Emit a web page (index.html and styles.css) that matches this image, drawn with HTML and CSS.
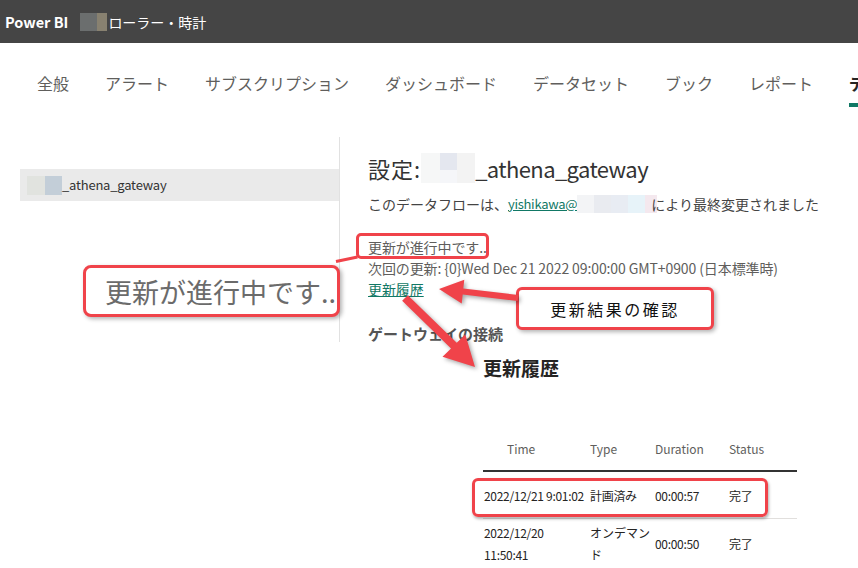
FILE: index.html
```html
<!DOCTYPE html>
<html lang="ja">
<head>
<meta charset="utf-8">
<title>Power BI - 設定</title>
<link rel="stylesheet" href="styles.css">
</head>
<body>
<header class="topbar">
  <span class="brand">Power BI</span>
  <span class="workspace"><span class="redact tb1"></span><span class="redact tb2"></span>ローラー・時計</span>
</header>

<nav class="tabs">
  <a class="tab">全般</a>
  <a class="tab">アラート</a>
  <a class="tab">サブスクリプション</a>
  <a class="tab">ダッシュボード</a>
  <a class="tab">データセット</a>
  <a class="tab">ブック</a>
  <a class="tab">レポート</a>
  <a class="tab active">データフロー</a>
</nav>

<main class="settings">
  <aside class="side">
    <div class="side-item selected"><span class="redact s1"></span><span class="redact s2"></span>_athena_gateway</div>
  </aside>
  <section class="detail">
    <h1 class="title">設定:<span class="redact t1"></span><span class="redact t2"></span><span class="redact t3"></span><span class="name">_athena_gateway</span></h1>
    <p class="owner">このデータフローは、<a class="link mail">yishikawa@</a><span class="redact o1"></span><span class="redact o2"></span><span class="redact o3"></span><span class="redact o4"></span><span class="redact o5"></span>により最終変更されました</p>
    <div class="status">
      <div>更新が進行中です..</div>
      <div>次回の更新: {0}Wed Dec 21 2022 09:00:00 GMT+0900 (日本標準時)</div>
      <div><a class="link">更新履歴</a></div>
    </div>
    <h3 class="section-head">ゲートウェイの接続</h3>
  </section>
</main>

<section class="history">
  <h2 class="history-title">更新履歴</h2>
  <div class="table-wrap">
    <table class="runs">
      <colgroup><col class="c-time"><col class="c-type"><col class="c-dur"><col class="c-status"></colgroup>
      <thead>
        <tr><th class="th-time">Time</th><th>Type</th><th>Duration</th><th>Status</th></tr>
      </thead>
      <tbody>
        <tr><td>2022/12/21 9:01:02</td><td>計画済み</td><td>00:00:57</td><td>完了</td></tr>
        <tr><td>2022/12/20<br>11:50:41</td><td class="wrap">オンデマンド</td><td>00:00:50</td><td>完了</td></tr>
      </tbody>
    </table>
    <div class="row-mark"></div>
  </div>
</section>

<div class="callout callout-status"><span>更新が進行中です..</span></div>
<div class="connector"></div>
<div class="mark-status"></div>
<div class="callout callout-check">更新結果の確認</div>

<svg class="arrows" width="858" height="568" viewBox="0 0 858 568" xmlns="http://www.w3.org/2000/svg">
  <polygon points="518.3,295 463.3,288.6 464.3,279.7 439,289 461.7,303.5 462.7,294.6 517.7,301"/>
  <polygon points="407.85,295.2 456.75,342.8 465.3,334.4 475,367 442.5,356.8 451.05,348.4 402.15,300.8"/>
</svg>
</body>
</html>
```

FILE: styles.css
```css
* { box-sizing: border-box; }

html, body {
  margin: 0;
  padding: 0;
}

body {
  width: 858px;
  height: 568px;
  overflow: hidden;
  position: relative;
  background: #ffffff;
  font-family: "Noto Sans CJK JP", "Noto Sans", sans-serif;
  color: #252423;
}

.redact {
  display: inline-block;
  vertical-align: middle;
}

/* top bar */
.topbar {
  height: 43px;
  background: #454545;
  display: flex;
  align-items: center;
  padding-left: 5px;
  color: #ffffff;
  font-size: 14px;
}
.brand {
  font-weight: 700;
  font-size: 14.5px;
}
.workspace {
  margin-left: 12px;
  display: flex;
  align-items: center;
}
.tb1 { width: 17px; height: 18px; background: #6b6e6e; }
.tb2 { width: 10px; height: 18px; background: #888170; margin-right: 1px; }

/* tabs */
.tabs {
  display: flex;
  gap: 36px;
  padding-left: 37px;
  height: 64px;
  white-space: nowrap;
  overflow: hidden;
}
.tab {
  padding-top: 29px;
  padding-bottom: 9px;
  line-height: 22px;
  font-size: 16px;
  color: #605e5c;
  border-bottom: 4px solid transparent;
}
.tab.active {
  color: #252423;
  font-weight: 700;
  border-bottom-color: #117865;
}

/* main settings */
.settings {
  display: flex;
  margin-top: 30px;
}
.side {
  margin-left: 20px;
  width: 320px;
  border-right: 1px solid #e1e1e1;
  padding-top: 32px;
}
.side-item {
  height: 32px;
  line-height: 32px;
  padding-left: 7px;
  font-size: 13px;
  color: #333333;
  display: flex;
  align-items: center;
  letter-spacing: -0.2px;
}
.side-item.selected { background: #eaeaea; }
.s1 { width: 18px; height: 19px; background: #e1e3df; }
.s2 { width: 17px; height: 19px; background: #c3ced8; }

.detail {
  padding-left: 28px;
  padding-top: 16px;
  flex: 1;
}
.title {
  margin: 0;
  font-size: 22px;
  font-weight: 400;
  line-height: 30px;
  color: #333333;
  display: flex;
  align-items: center;
  letter-spacing: 1px;
}
.title .name { letter-spacing: -0.6px; }
.t1 { width: 19px; height: 30px; background: #f6f7f7; }
.t2 { width: 17px; height: 30px; background: linear-gradient(#e4e7ef 0 55%, #f5f6f9 55%); }
.t3 { width: 18px; height: 30px; background: #f3f3f3; }

.owner {
  margin: 11px 0 0;
  font-size: 14px;
  line-height: 20px;
  color: #444444;
  display: flex;
  align-items: center;
  white-space: nowrap;
}
.o1, .o2, .o3, .o4, .o5 { width: 17px; height: 18px; }
.o1 { background: #f3f4f6; }
.o2 { background: #e9ebf0; }
.o3 { background: #e8ecf3; }
.o4 { background: #e7f3f9; }
.o5 { background: #f4e8ee; width: 12px; margin-right: -6px; }

.link {
  color: #117865;
  text-decoration: underline;
}
.link.mail {
  font-size: 13px;
  letter-spacing: -0.3px;
}

.status {
  margin-top: 23px;
  font-size: 14px;
  line-height: 21px;
  color: #605e5c;
  white-space: nowrap;
  letter-spacing: -0.1px;
}

.section-head {
  margin: 25px 0 0;
  font-size: 15px;
  line-height: 17px;
  font-weight: 700;
  color: #555555;
}

/* history */
.history {
  padding-left: 483px;
}
.history-title {
  margin: 13px 0 0;
  font-size: 19px;
  line-height: 26px;
  font-weight: 700;
  color: #252423;
}
.table-wrap {
  position: relative;
  margin-top: 45px;
  width: 314px;
}
.runs {
  width: 314px;
  border-collapse: collapse;
  table-layout: fixed;
  font-size: 12px;
}
.c-time { width: 106px; }
.c-type { width: 65px; }
.c-dur { width: 74px; }
.c-status { width: 69px; }
.runs th {
  height: 45px;
  text-align: left;
  font-weight: 400;
  color: #605e5c;
  padding: 0 0 0 1px;
  border-bottom: 2px solid #333333;
  vertical-align: middle;
}
.runs th.th-time { padding-left: 24px; }
.runs td {
  height: 47px;
  padding: 3px 0 1px 1px;
  line-height: 22px;
  vertical-align: middle;
  white-space: nowrap;
  color: #252423;
  letter-spacing: -0.3px;
}
.runs td.wrap { white-space: normal; word-break: break-all; letter-spacing: 0; }
.runs tbody tr:first-child td { border-bottom: 1px solid #e1dfdd; }

.row-mark {
  position: absolute;
  left: -11px;
  top: 52px;
  width: 296px;
  height: 39px;
  border: 3px solid #f0434a;
  border-radius: 6px;
  box-shadow: 1px 2px 3px rgba(0, 0, 0, 0.3);
}

/* annotations */
.callout {
  position: absolute;
  background: #ffffff;
  border: 3px solid #f0434a;
  border-radius: 8px;
  box-shadow: 2px 2px 4px rgba(0, 0, 0, 0.3);
}
.callout-status {
  left: 83px;
  top: 265px;
  width: 257px;
  height: 52px;
  padding-left: 19px;
  display: flex;
  align-items: center;
  font-size: 27px;
  color: #6b6b6b;
  white-space: nowrap;
}
.callout-check {
  left: 516px;
  top: 287px;
  width: 198px;
  height: 43px;
  border-radius: 6px;
  display: flex;
  align-items: center;
  justify-content: center;
  font-size: 16px;
  letter-spacing: 2.5px;
  color: #111111;
}
.connector {
  position: absolute;
  left: 336px;
  top: 260px;
  width: 22px;
  height: 3px;
  background: #f0434a;
  transform: rotate(-12deg);
  transform-origin: left center;
}
.mark-status {
  position: absolute;
  left: 356px;
  top: 233px;
  width: 133px;
  height: 26px;
  border: 3px solid #f0434a;
  border-radius: 5px;
}
.arrows {
  position: absolute;
  left: 0;
  top: 0;
  pointer-events: none;
  filter: drop-shadow(2px 2px 2px rgba(0, 0, 0, 0.35));
}
.arrows polygon { fill: #f0434a; }
```
